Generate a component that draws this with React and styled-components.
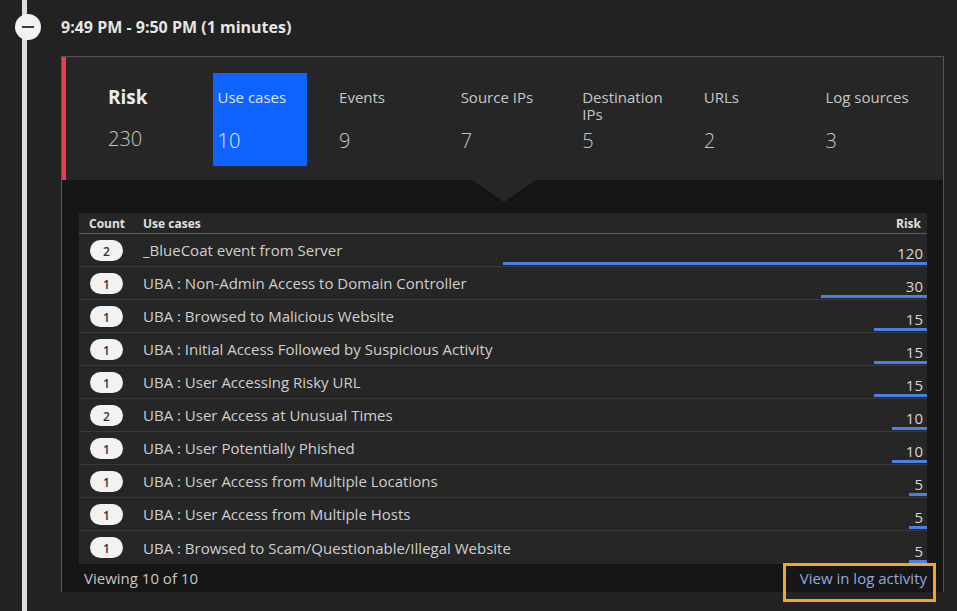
import React from 'react'
import styled, { createGlobalStyle } from 'styled-components'

const GlobalStyle = createGlobalStyle`
  html, body {
    margin: 0;
    background: #222222;
    font-family: "Open Sans", "Noto Sans", sans-serif;
    color: #c6c6c6;
  }
`;

const Page = styled.div`
  display: flex;
  width: 957px;
  height: 611px;
  overflow: hidden;
  background: #222222;
`;

const Rail = styled.div`
  width: 61px;
  flex: none;
  background: linear-gradient(#dedede, #dedede) no-repeat 22px 0 / 5px 100%;
`;

const Knob = styled.div`
  width: 26px;
  height: 26px;
  margin: 14px 0 0 15px;
  border-radius: 50%;
  background: #f2f2f2;
  display: flex;
  align-items: center;
  justify-content: center;
  &::before {
    content: "";
    width: 12px;
    height: 2px;
    background: #3c3c3c;
  }
`;

const Main = styled.div`
  flex: none;
  width: 883px;
  display: flex;
  flex-direction: column;
`;

const Heading = styled.div`
  height: 56px;
  display: flex;
  align-items: center;
  padding-bottom: 2px;
  box-sizing: border-box;
  font-size: 16px;
  font-weight: 700;
  color: #e6e6e6;
`;

const Card = styled.div`
  border: 1px solid #555555;
  height: 536px;
  box-sizing: border-box;
  display: flex;
  flex-direction: column;
`;

const Summary = styled.div`
  height: 123px;
  flex: none;
  display: flex;
  background: #262626;
  border-left: 4px solid #e3414c;
  padding: 16px 0 0 42px;
  box-sizing: border-box;
`;

const RiskCol = styled.div`
  width: 106px;
  padding-top: 11px;
  display: flex;
  flex-direction: column;
  gap: 15px;
`;

const RiskLabel = styled.div`
  font-size: 19px;
  font-weight: 700;
  color: #ececec;
`;

const Stat = styled.div`
  width: 94px;
  height: 93px;
  margin-right: 28px;
  padding: 16px 4px 0;
  box-sizing: border-box;
  background: ${(p) => (p.active ? '#0f62fe' : 'transparent')};
  display: flex;
  flex-direction: column;
`;

const StatLabel = styled.div`
  font-size: 15px;
  line-height: 17px;
  height: 38px;
  color: ${(p) => (p.active ? '#dde6ff' : '#c6c6c6')};
`;

const StatValue = styled.div`
  font-size: 20px;
  font-weight: 300;
  color: ${(p) => (p.active ? '#e4ecff' : '#c6c6c6')};
`;

const Detail = styled.div`
  position: relative;
  flex: 1;
  background: #161616;
  padding: 33px 16px 0 17px;
  display: flex;
  flex-direction: column;
  &::before {
    content: "";
    position: absolute;
    top: 0;
    left: 410px;
    border-left: 32px solid transparent;
    border-right: 32px solid transparent;
    border-top: 22px solid #262626;
  }
`;

const Table = styled.div`
  background: #262626;
  display: flex;
  flex-direction: column;
`;

const HeadRow = styled.div`
  height: 21px;
  display: grid;
  grid-template-columns: 54px minmax(0, 1fr) 120px;
  align-items: center;
  font-size: 12px;
  font-weight: 700;
  color: #e0e0e0;
  border-bottom: 1px solid #5c5c5c;
  box-sizing: border-box;
  padding: 0 6px 0 10px;
`;

const RiskHead = styled.div`
  text-align: right;
`;

const Row = styled.div`
  height: 33px;
  display: grid;
  grid-template-columns: 53px minmax(0, 1fr) 430px;
  align-items: center;
  border-bottom: 1px solid #393939;
  box-sizing: border-box;
  padding-left: 11px;
  &:last-child {
    border-bottom: none;
  }
`;

const Badge = styled.span`
  width: 33px;
  height: 21px;
  border-radius: 11px;
  background: #f2f2f2;
  color: #333333;
  font-size: 12px;
  font-weight: 600;
  display: flex;
  align-items: flex-end;
  justify-content: center;
  padding-bottom: 1px;
  box-sizing: border-box;
`;

const CaseName = styled.span`
  font-size: 15px;
  color: #cfcfcf;
  white-space: nowrap;
`;

const RiskCell = styled.div`
  align-self: stretch;
  display: flex;
  flex-direction: column;
  align-items: flex-end;
  justify-content: flex-end;
  padding-bottom: 1px;
`;

const RiskValue = styled.span`
  font-size: 15px;
  line-height: 17px;
  color: #d6d6d6;
  padding-right: 4px;
`;

const Bar = styled.div`
  height: 3px;
  background: #4a7fe6;
`;

const Footer = styled.div`
  height: 28px;
  display: flex;
  align-items: center;
  justify-content: space-between;
  padding-left: 5px;
  font-size: 15px;
  color: #c6c6c6;
`;

const LogLink = styled.a`
  position: relative;
  color: #8fa9dc;
  text-decoration: none;
  &::after {
    content: "";
    position: absolute;
    left: -17px;
    right: -9px;
    top: -5px;
    bottom: -14px;
    border: 3px solid #f2a71c;
  }
`;

const stats = [
  { label: 'Use cases', value: 10, active: true },
  { label: 'Events', value: 9 },
  { label: 'Source IPs', value: 7 },
  { label: 'Destination IPs', value: 5 },
  { label: 'URLs', value: 2 },
  { label: 'Log sources', value: 3 },
];

const cases = [
  { count: 2, name: '_BlueCoat event from Server', risk: 120 },
  { count: 1, name: 'UBA : Non-Admin Access to Domain Controller', risk: 30 },
  { count: 1, name: 'UBA : Browsed to Malicious Website', risk: 15 },
  { count: 1, name: 'UBA : Initial Access Followed by Suspicious Activity', risk: 15 },
  { count: 1, name: 'UBA : User Accessing Risky URL', risk: 15 },
  { count: 2, name: 'UBA : User Access at Unusual Times', risk: 10 },
  { count: 1, name: 'UBA : User Potentially Phished', risk: 10 },
  { count: 1, name: 'UBA : User Access from Multiple Locations', risk: 5 },
  { count: 1, name: 'UBA : User Access from Multiple Hosts', risk: 5 },
  { count: 1, name: 'UBA : Browsed to Scam/Questionable/Illegal Website', risk: 5 },
];

const maxRisk = 120;

const App = () => {
  return (
    <Page>
      <GlobalStyle />
      <Rail>
        <Knob />
      </Rail>
      <Main>
        <Heading>9:49 PM - 9:50 PM (1 minutes)</Heading>
        <Card>
          <Summary>
            <RiskCol>
              <RiskLabel>Risk</RiskLabel>
              <StatValue>230</StatValue>
            </RiskCol>
            {stats.map((s) => (
              <Stat key={s.label} active={s.active}>
                <StatLabel active={s.active}>{s.label}</StatLabel>
                <StatValue active={s.active}>{s.value}</StatValue>
              </Stat>
            ))}
          </Summary>
          <Detail>
            <Table>
              <HeadRow>
                <span>Count</span>
                <span>Use cases</span>
                <RiskHead>Risk</RiskHead>
              </HeadRow>
              {cases.map((c) => (
                <Row key={c.name}>
                  <Badge>{c.count}</Badge>
                  <CaseName>{c.name}</CaseName>
                  <RiskCell>
                    <RiskValue>{c.risk}</RiskValue>
                    <Bar style={{ width: `${Math.round((c.risk / maxRisk) * 424)}px` }} />
                  </RiskCell>
                </Row>
              ))}
            </Table>
            <Footer>
              <span>Viewing 10 of 10</span>
              <LogLink href="#">View in log activity</LogLink>
            </Footer>
          </Detail>
        </Card>
      </Main>
    </Page>
  );
};

export default App;
